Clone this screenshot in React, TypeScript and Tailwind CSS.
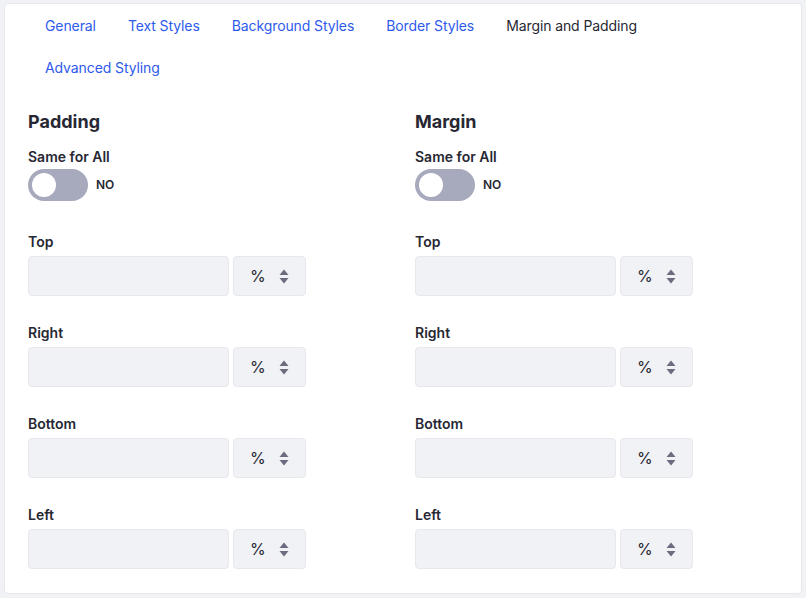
import React from "react";

const tabs = [
  { label: "General", active: false },
  { label: "Text Styles", active: false },
  { label: "Background Styles", active: false },
  { label: "Border Styles", active: false },
  { label: "Margin and Padding", active: true },
  { label: "Advanced Styling", active: false },
];

const sides = ["Top", "Right", "Bottom", "Left"];

function Toggle() {
  return (
    <div className="flex items-center gap-2 mt-[2px]">
      <div className="w-[60px] h-[32px] rounded-full bg-[#a7a9bc] flex items-center pl-1">
        <div className="w-6 h-6 rounded-full bg-white" />
      </div>
      <span className="text-[12px] font-semibold text-[#272833]">NO</span>
    </div>
  );
}

function Carets() {
  return (
    <svg width="10" height="15" viewBox="0 0 10 15" className="text-[#6b6c7e]">
      <path d="M5 0.5 L9.5 6 L0.5 6 Z" fill="currentColor" />
      <path d="M5 14.5 L9.5 9 L0.5 9 Z" fill="currentColor" />
    </svg>
  );
}

function SideField({ label }: { label: string }) {
  return (
    <div className="flex flex-col">
      <label className="text-[14px] leading-5 font-semibold text-[#272833]">{label}</label>
      <div className="flex gap-1 mt-1">
        <div className="w-[201px] h-10 rounded-[4px] bg-[#f1f2f5] border border-[#e7e7ed]" />
        <div className="w-[73px] h-10 rounded-[4px] bg-[#f1f2f5] border border-[#e7e7ed] flex items-center pl-[16px] gap-[13px] text-[#272833]">
          <span className="text-[16px]">%</span>
          <Carets />
        </div>
      </div>
    </div>
  );
}

function SpacingColumn({ title }: { title: string }) {
  return (
    <div className="flex flex-col">
      <h2 className="text-[18px] leading-6 font-bold text-[#272833]">{title}</h2>
      <div className="mt-[13px] text-[14px] leading-5 font-semibold text-[#272833]">Same for All</div>
      <Toggle />
      <div className="flex flex-col gap-[27px] mt-[31px]">
        {sides.map((s) => (
          <SideField key={s} label={s} />
        ))}
      </div>
    </div>
  );
}

export default function App() {
  return (
    <div
      className="h-[598px] bg-[#f1f2f5] pt-[3px] px-[4px]"
      style={{ fontFamily: "Inter, 'Noto Sans', sans-serif" }}
    >
      <div className="h-[591px] bg-white rounded-[4px] border border-[#e7e7ed]">
        <nav className="flex flex-wrap pl-6 pr-6">
          {tabs.map((t) => (
            <a
              key={t.label}
              className={
                "px-4 h-[42px] flex items-center text-[14px] tracking-[-0.1px] " +
                (t.active ? "text-[#272833]" : "text-[#2e5aeb]")
              }
            >
              {t.label}
            </a>
          ))}
        </nav>
        <div className="grid grid-cols-2 gap-6 px-[23px] mt-[22px]">
          <SpacingColumn title="Padding" />
          <SpacingColumn title="Margin" />
        </div>
      </div>
    </div>
  );
}
